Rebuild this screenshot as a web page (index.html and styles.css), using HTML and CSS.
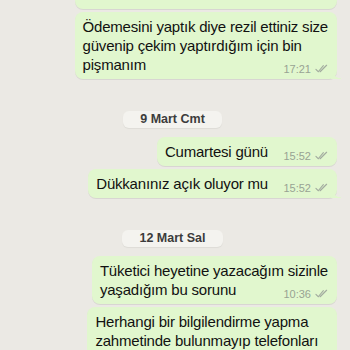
FILE: index.html
```
<!DOCTYPE html>
<html>
  <head>
    <meta charset="utf-8" />
    <meta name="viewport" content="width=device-width, initial-scale=1.0" />
    <link rel="stylesheet" href="styles.css">
  </head>
  <body>
    <div id="chat">
      <div class="bubble first">
        <span class="text">Bu ay, hâlâ</span>
        <span class="meta">17:21 <svg class="ticks" viewBox="0 0 14 9"><path d="M1 5.5l2.5 2.5L9 1.5M5.5 8L12.5 1" /></svg></span>
      </div>
      <div class="bubble tail">
        <span class="text">Ödemesini yaptık diye rezil ettiniz size<br>güvenip çekim yaptırdığım için bin<br>pişmanım</span>
        <span class="meta">17:21 <svg class="ticks" viewBox="0 0 14 9"><path d="M1 5.5l2.5 2.5L9 1.5M5.5 8L12.5 1" /></svg></span>
      </div>

      <div class="day">9 Mart Cmt</div>

      <div class="bubble">
        <span class="text">Cumartesi günü</span>
        <span class="meta">15:52 <svg class="ticks" viewBox="0 0 14 9"><path d="M1 5.5l2.5 2.5L9 1.5M5.5 8L12.5 1" /></svg></span>
      </div>
      <div class="bubble tail">
        <span class="text">Dükkanınız açık oluyor mu</span>
        <span class="meta">15:52 <svg class="ticks" viewBox="0 0 14 9"><path d="M1 5.5l2.5 2.5L9 1.5M5.5 8L12.5 1" /></svg></span>
      </div>

      <div class="day second">12 Mart Sal</div>

      <div class="bubble">
        <span class="text">Tüketici heyetine yazacağım sizinle<br>yaşadığım bu sorunu</span>
        <span class="meta">10:36 <svg class="ticks" viewBox="0 0 14 9"><path d="M1 5.5l2.5 2.5L9 1.5M5.5 8L12.5 1" /></svg></span>
      </div>
      <div class="bubble">
        <span class="text">Herhangi bir bilgilendirme yapma<br>zahmetinde bulunmayıp telefonları<br>açmadınız, hiç dönmediniz</span>
        <span class="meta">10:37 <svg class="ticks" viewBox="0 0 14 9"><path d="M1 5.5l2.5 2.5L9 1.5M5.5 8L12.5 1" /></svg></span>
      </div>
    </div>
  </body>
</html>
```

FILE: styles.css
```
html {
  font-family: "Liberation Sans", "Helvetica Neue", Arial, sans-serif;
}

body {
  margin: 0;
  width: 350px;
  height: 350px;
  overflow: hidden;
  background-color: #ebe9e4;
}

#chat {
  display: flex;
  flex-direction: column;
  align-items: flex-end;
  padding: 0 13px 0 0;
}

.bubble {
  position: relative;
  display: grid;
  box-sizing: border-box;
  margin-top: 3px;
  padding: 5px 9px 5px 8px;
  background-color: #e1f7ce;
  border-radius: 8px;
  box-shadow: 0 1px 0.5px rgba(0, 0, 0, 0.08);
  color: #111;
  font-size: 15px;
  letter-spacing: -0.2px;
  line-height: 19px;
}

.bubble.first {
  margin-top: -24px;
  padding-bottom: 9px;
  width: 262px;
}

.bubble.tail::after {
  content: "";
  position: absolute;
  right: -4px;
  bottom: 0;
  width: 10px;
  height: 10px;
  background: radial-gradient(circle at 100% 0, transparent 9px, #e1f7ce 9.5px);
}

.text,
.meta {
  grid-area: 1 / 1;
}

.text::after {
  content: "";
  display: inline-block;
  width: 60px;
}

.meta {
  justify-self: end;
  align-self: end;
  margin-bottom: -2px;
  color: #98a393;
  font-size: 11px;
  letter-spacing: 0;
  line-height: 14px;
  white-space: nowrap;
}

.ticks {
  width: 13px;
  height: 9px;
  margin-left: 1px;
  fill: none;
  stroke: #a2ab9f;
  stroke-width: 1.2;
  stroke-linecap: round;
}

.day {
  align-self: center;
  margin: 32px 0 6px 8px;
  padding: 1px 17px;
  background-color: #f4f3ef;
  border-radius: 6px;
  box-shadow: 0 1px 1px rgba(0, 0, 0, 0.06);
  color: #3c3c3c;
  font-size: 12.5px;
  font-weight: bold;
  line-height: 15px;
}

.day.second {
  margin-top: 32px;
}
```
